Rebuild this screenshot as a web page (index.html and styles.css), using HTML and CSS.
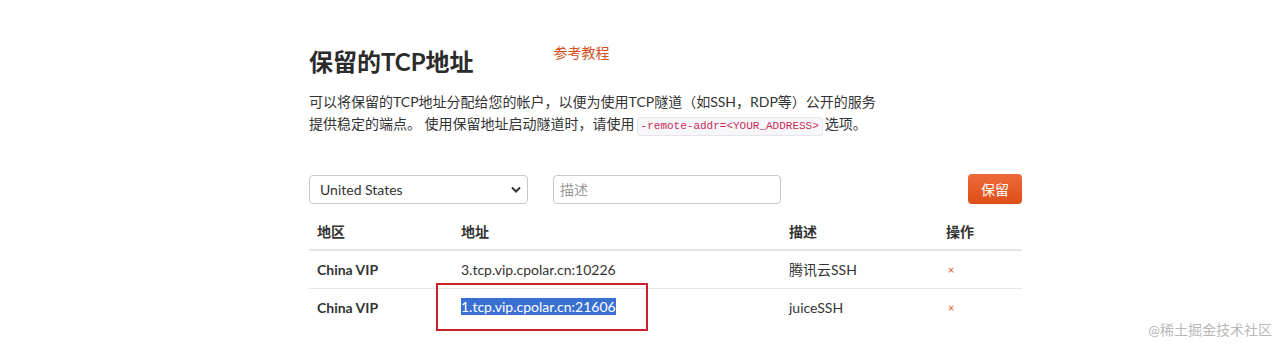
FILE: index.html
```html
<!DOCTYPE html>
<html lang="zh-CN">
<head>
  <meta charset="UTF-8">
  <title>保留的TCP地址</title>
  <link rel="stylesheet" href="styles.css">
</head>
<body>
  <div class="container">
    <div class="header">
      <h1>保留的TCP地址</h1>
      <a class="guide" href="#">参考教程</a>
    </div>

    <p class="intro">可以将保留的TCP地址分配给您的帐户，以便为使用TCP隧道（如SSH，RDP等）公开的服务提供稳定的端点。 使用保留地址启动隧道时，请使用<code>-remote-addr=&lt;YOUR_ADDRESS&gt;</code>选项。</p>

    <form class="reserve-form" onsubmit="return false">
      <select class="region">
        <option>United States</option>
        <option>China VIP</option>
      </select>
      <input class="desc" type="text" placeholder="描述">
      <button class="btn-reserve">保留</button>
    </form>

    <table class="addr-table">
      <thead>
        <tr>
          <th class="col-region">地区</th>
          <th class="col-addr">地址</th>
          <th class="col-desc">描述</th>
          <th>操作</th>
        </tr>
      </thead>
      <tbody>
        <tr>
          <td class="region-name">China VIP</td>
          <td>3.tcp.vip.cpolar.cn:10226</td>
          <td>腾讯云SSH</td>
          <td><a class="remove" href="#">×</a></td>
        </tr>
        <tr>
          <td class="region-name">China VIP</td>
          <td><span class="mark-box"><span class="selected">1.tcp.vip.cpolar.cn:21606</span></span></td>
          <td>juiceSSH</td>
          <td><a class="remove" href="#">×</a></td>
        </tr>
      </tbody>
    </table>
  </div>

  <div class="watermark">@稀土掘金技术社区</div>
</body>
</html>
```

FILE: styles.css
```css
body {
  margin: 0;
  font-family: Lato, "Noto Sans CJK SC", sans-serif;
  font-size: 14px;
  color: #333;
  background-color: #fff;
}
.container {
  width: 713px;
  margin-left: 309px;
  padding-top: 40px;
  padding-bottom: 40px;
}
.header {
  display: flex;
  align-items: flex-start;
}
.header h1 {
  margin: 3px 0 0;
  font-size: 24px;
  line-height: 38px;
  font-weight: 700;
  color: #2b2b2b;
}
.guide {
  margin-left: 80px;
  margin-top: 3px;
  color: #d5501d;
  text-decoration: none;
  font-size: 14px;
  line-height: 20px;
}
.intro {
  width: 575px;
  margin: 10px 0 0;
  line-height: 22px;
}
code {
  display: inline-block;
  font-family: "Liberation Mono", monospace;
  font-size: 11px;
  line-height: 17px;
  color: #c92a5a;
  background-color: #f7f7f9;
  border: 1px solid #e4e4ea;
  border-radius: 3px;
  padding: 0 3px;
  margin: 0 2px;
}
.reserve-form {
  display: flex;
  align-items: center;
  margin-top: 38px;
}
.region,
.desc {
  box-sizing: border-box;
  height: 29px;
  border: 1px solid #c8c8c8;
  border-radius: 4px;
  font-family: inherit;
  font-size: 14px;
  color: #333;
  background-color: #fff;
}
.region {
  width: 219px;
  padding: 0 24px 0 10px;
  appearance: none;
  background-image: url("data:image/svg+xml,%3Csvg xmlns='http://www.w3.org/2000/svg' width='10' height='7' viewBox='0 0 10 7'%3E%3Cpath d='M1 1.5l4 4 4-4' fill='none' stroke='%23333' stroke-width='2'/%3E%3C/svg%3E");
  background-repeat: no-repeat;
  background-position: right 6px center;
}
.desc {
  width: 228px;
  margin-left: 25px;
  padding: 0 6px;
}
.desc::placeholder {
  color: #999;
}
.btn-reserve {
  margin-left: auto;
  width: 54px;
  height: 30px;
  border: none;
  border-radius: 4px;
  background: linear-gradient(#ee6a3b, #df4e18);
  color: #fff;
  font-family: inherit;
  font-size: 14px;
  cursor: pointer;
}
.addr-table {
  width: 100%;
  margin-top: 9px;
  border-collapse: collapse;
}
.addr-table th,
.addr-table td {
  text-align: left;
  padding: 8px;
  line-height: 20px;
}
.addr-table th {
  padding-top: 9px;
  padding-bottom: 7px;
  font-weight: 700;
  border-bottom: 2px solid #e5e5e5;
}
.addr-table td {
  border-bottom: 1px solid #e5e5e5;
}
.addr-table tbody tr:last-child td {
  border-bottom: none;
}
.col-region {
  width: 128px;
}
.col-addr {
  width: 312px;
}
.col-desc {
  width: 141px;
}
.region-name {
  font-weight: 700;
}
.remove {
  color: #e95420;
  text-decoration: none;
  font-size: 11px;
  margin-left: 2px;
}
.mark-box {
  display: inline-block;
  vertical-align: top;
  line-height: 20px;
  padding: 12px 30px 12px 23px;
  margin: -15px -32px -13px -25px;
  border: 2px solid #c9212e;
}
.selected {
  background-color: #3a6fd2;
  color: #fff;
}
.watermark {
  position: absolute;
  right: 6px;
  top: 320px;
  font-size: 14px;
  line-height: 20px;
  color: #b8b8b8;
}
```
